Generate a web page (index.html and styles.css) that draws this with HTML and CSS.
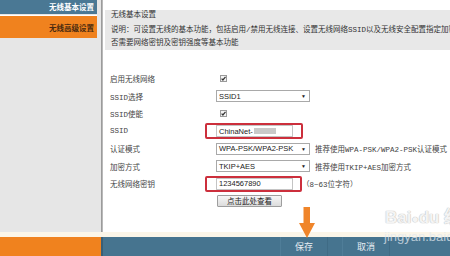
FILE: index.html
```html
<!DOCTYPE html>
<html lang="zh-CN">
<head>
<meta charset="utf-8">
<title>无线基本设置</title>
<link rel="stylesheet" href="styles.css">
</head>
<body>
<div class="page">
  <div class="top">
    <aside class="sidebar">
      <div class="nav-item nav-basic">无线基本设置</div>
      <div class="nav-item nav-adv">无线高级设置</div>
    </aside>
    <div class="divider"></div>
    <main class="main">
      <div class="intro">
        <div class="intro-title">无线基本设置</div>
        <div class="intro-line">说明：可设置无线的基本功能，包括启用/禁用无线连接、设置无线网络SSID以及无线安全配置指定加密方式、是</div>
        <div class="intro-line">否需要网络密钥及密钥强度等基本功能</div>
      </div>
      <div class="form">
        <div class="label">启用无线网络</div>
        <div class="ctrl"><svg class="check" width="7" height="7" viewBox="0 0 7 7"><rect x="0.5" y="0.5" width="6" height="6" fill="#f4f4f4" stroke="#9a9a9a"/><path d="M1.6 3.6 L2.9 5 L5.5 1.8" fill="none" stroke="#333" stroke-width="1.2"/></svg></div>

        <div class="label">SSID选择</div>
        <div class="ctrl"><div class="select"><span>SSID1</span><span class="arrow">▼</span></div></div>

        <div class="label">SSID使能</div>
        <div class="ctrl"><svg class="check" width="7" height="7" viewBox="0 0 7 7"><rect x="0.5" y="0.5" width="6" height="6" fill="#f4f4f4" stroke="#9a9a9a"/><path d="M1.6 3.6 L2.9 5 L5.5 1.8" fill="none" stroke="#333" stroke-width="1.2"/></svg></div>

        <div class="label">SSID</div>
        <div class="ctrl"><div class="input-wrap"><div class="input">ChinaNet-<span class="blur"></span></div><div class="mark mark-ssid"></div></div></div>

        <div class="label">认证模式</div>
        <div class="ctrl"><div class="select"><span>WPA-PSK/WPA2-PSK</span><span class="arrow">▼</span></div><span class="hint">推荐使用WPA-PSK/WPA2-PSK认证模式</span></div>

        <div class="label">加密方式</div>
        <div class="ctrl"><div class="select"><span>TKIP+AES</span><span class="arrow">▼</span></div><span class="hint">推荐使用TKIP+AES加密方式</span></div>

        <div class="label">无线网络密钥</div>
        <div class="ctrl"><div class="input-wrap"><div class="input">1234567890</div><div class="mark mark-key"></div></div><span class="hint hint-key">（8~63位字符）</span></div>

        <div class="label"></div>
        <div class="ctrl"><div class="btn">点击此处查看</div></div>
      </div>
    </main>
  </div>
  <div class="strip"></div>
  <footer class="footer">
    <div class="foot-left"></div>
    <div class="foot-div"></div>
    <div class="foot-right">
      <div class="fbtn fbtn-save">保存</div>
      <div class="fbtn fbtn-cancel">取消</div>
    </div>
  </footer>
  <svg class="down-arrow" width="16" height="31" viewBox="0 0 16 31"><rect x="4.5" y="0" width="6.5" height="18" fill="#f0852a"/><polygon points="0,16 16,16 8,31" fill="#f0852a"/></svg>
  <div class="wm wm-logo">Bai<span class="paw">●</span>du 经验</div>
  <div class="wm wm-url">jingyan.baidu</div>
</div>
</body>
</html>
```
FILE: styles.css
```css
html, body {
  margin: 0;
  padding: 0;
}
body {
  width: 450px;
  height: 256px;
  overflow: hidden;
  background: #ffffff;
  font-family: "Liberation Mono", "Noto Sans CJK SC", monospace;
  font-size: 7.5px;
  color: #3a3a3a;
}
.page {
  position: relative;
  width: 450px;
  height: 256px;
  display: flex;
  flex-direction: column;
}
.top {
  display: flex;
  height: 232px;
}
.sidebar {
  width: 101px;
  flex: none;
  background: #e6e6e6;
  display: flex;
  flex-direction: column;
  gap: 1px;
}
.nav-item {
  width: 97px;
  text-align: right;
  box-sizing: border-box;
  padding-right: 3px;
  font-family: "Noto Sans CJK SC", sans-serif;
  font-weight: bold;
}
.nav-basic {
  height: 14px;
  line-height: 14px;
  background: #4a7894;
  color: #ffffff;
}
.nav-adv {
  height: 23px;
  line-height: 23px;
  background: #f0821e;
  color: #4a2a10;
  border-top: 1px solid #ffffff;
}
.divider {
  width: 2px;
  flex: none;
  background: linear-gradient(to right, #8c8c8c, #c8c8c8);
}
.main {
  flex: 1;
  min-width: 0;
  padding-left: 2px;
  overflow: hidden;
}
.intro {
  margin-top: 10px;
  height: 40px;
  background: #e8e8e8;
  padding-left: 6px;
  white-space: nowrap;
  overflow: hidden;
  font-family: "Liberation Mono", "Noto Sans CJK SC", monospace;
  color: #333;
}
.intro-title {
  height: 11px;
  line-height: 11px;
}
.intro-line {
  line-height: 13px;
}
.intro-title + .intro-line {
  margin-top: 3px;
}
.form {
  margin-top: 20px;
  padding-left: 5px;
  display: grid;
  grid-template-columns: 106px 1fr;
  grid-auto-rows: 17.5px;
  align-items: center;
}
.label {
  white-space: nowrap;
  color: #444;
}
.ctrl {
  display: flex;
  align-items: center;
  white-space: nowrap;
}
.check {
  display: block;
  margin-left: 4px;
}
.select {
  width: 94px;
  height: 12px;
  box-sizing: border-box;
  border: 1px solid #a9a9a9;
  background: #fff;
  display: flex;
  align-items: center;
  justify-content: space-between;
  padding: 0 3px 0 2px;
  font-family: "Liberation Sans", sans-serif;
  font-size: 7.5px;
  color: #222;
}
.arrow {
  font-size: 5px;
  color: #222;
}
.hint {
  margin-left: 5px;
  color: #444;
}
.hint-key {
  margin-left: 9px;
}
.input-wrap {
  position: relative;
}
.input {
  width: 77px;
  height: 12px;
  box-sizing: border-box;
  border: 1px solid #c4c4c4;
  background: #fff;
  padding-left: 2px;
  display: flex;
  align-items: center;
  font-family: "Liberation Sans", sans-serif;
  font-size: 7.5px;
  color: #222;
}
.blur {
  display: inline-block;
  width: 22px;
  height: 6px;
  background: #c9c9c9;
  margin-left: 1px;
}
.mark {
  position: absolute;
  top: -2px;
  bottom: -2px;
  left: -11px;
  border: 2px solid #cc2f3c;
  border-radius: 2px;
}
.mark-ssid {
  right: -10px;
}
.mark-key {
  right: -9px;
}
.btn {
  width: 65px;
  height: 12px;
  box-sizing: border-box;
  border: 1px solid #9e9e9e;
  border-radius: 1px;
  background: linear-gradient(#f6f6f6, #dcdcdc);
  text-align: center;
  line-height: 10px;
  margin-left: 1px;
  font-family: "Noto Sans CJK SC", sans-serif;
  color: #222;
}
.strip {
  height: 5px;
  background: #fbf5e8;
}
.footer {
  height: 19px;
  display: flex;
}
.foot-left {
  width: 101px;
  background: #f0821e;
}
.foot-div {
  width: 2px;
  background: #3a5f76;
}
.foot-right {
  flex: 1;
  background: #46748f;
  display: flex;
  padding-left: 177px;
  gap: 14px;
}
.fbtn {
  width: 48px;
  text-align: center;
  line-height: 19px;
  font-family: "Noto Sans CJK SC", sans-serif;
  font-size: 9px;
  color: #e6edf2;
  box-sizing: border-box;
  border-left: 1px solid #4f7d98;
  border-right: 1px solid #3f6b85;
}
.down-arrow {
  position: absolute;
  left: 299px;
  top: 207px;
}
.wm {
  position: absolute;
  white-space: nowrap;
  color: rgba(255, 255, 255, 0.7);
  font-family: "Liberation Sans", sans-serif;
}
.wm-logo {
  left: 385px;
  top: 203px;
  font-size: 17px;
  font-weight: bold;
  text-shadow: 0 0 1px #bbbbbb, 0 0 1px #bbbbbb;
  color: rgba(255, 255, 255, 0.85);
}
.paw {
  font-size: 12px;
}
.wm-url {
  left: 384px;
  top: 229px;
  font-size: 13px;
  color: rgba(225, 232, 238, 0.75);
}
```
